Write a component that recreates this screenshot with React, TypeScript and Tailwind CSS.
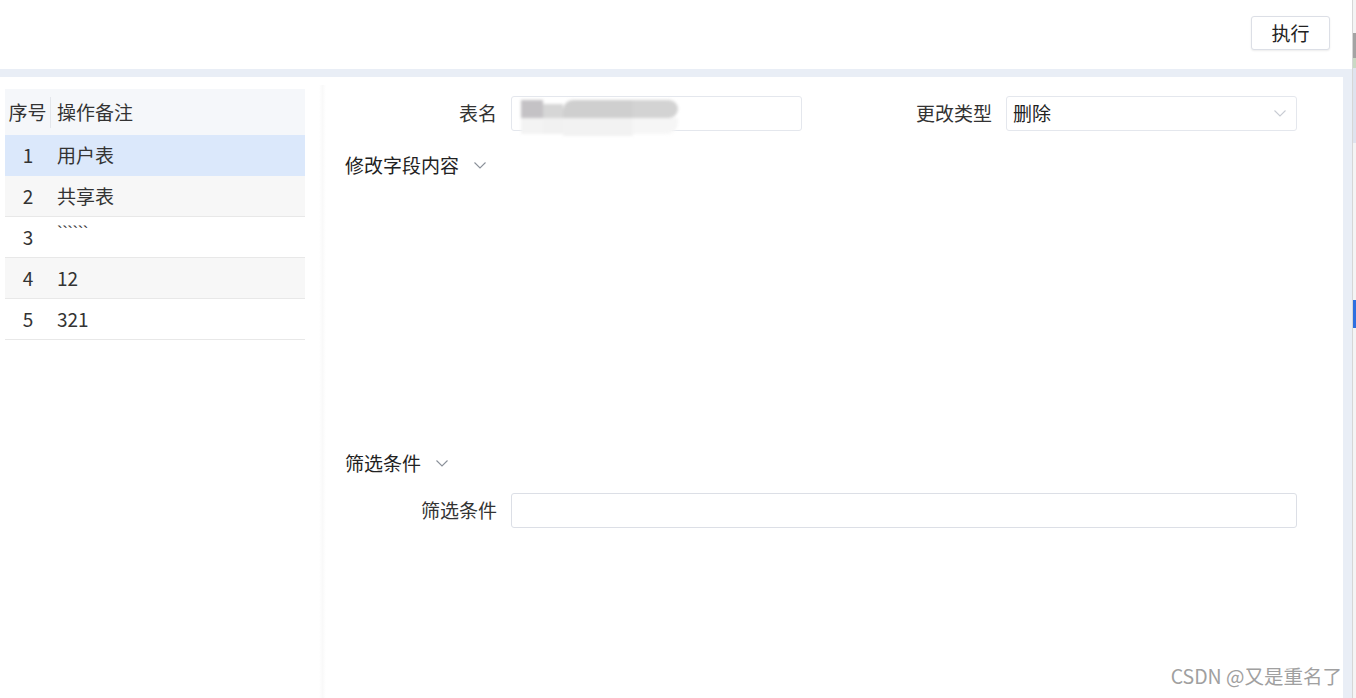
import React from "react";

const font = { fontFamily: '"Microsoft YaHei", "Noto Sans CJK SC", "Noto Sans", sans-serif' };

const rows = [
  { id: 1, note: "用户表" },
  { id: 2, note: "共享表" },
  { id: 3, note: "``````" },
  { id: 4, note: "12" },
  { id: 5, note: "321" },
];

function Chevron({ className }: { className?: string }) {
  return (
    <svg viewBox="0 0 12 7" className={className} fill="none">
      <polyline points="0.5,0.5 6,6 11.5,0.5" stroke="currentColor" strokeWidth="1.1" />
    </svg>
  );
}

function RecordTable() {
  return (
    <div className="w-[300px] text-[19px] text-[#333]">
      <div className="flex h-[46px] items-center bg-[#f5f7fa]">
        <div className="flex h-[31px] w-[46px] items-center justify-center border-r border-[#e3e6eb]">
          序号
        </div>
        <div className="pl-[6px]">操作备注</div>
      </div>
      {rows.map((r, i) => (
        <div
          key={r.id}
          className={`flex h-[41px] items-center border-b ${
            i === 0
              ? "border-[#dbe8fb] bg-[#dbe8fb]"
              : i % 2 === 1
              ? "border-[#e8e8e8] bg-[#f7f7f7]"
              : "border-[#e8e8e8] bg-white"
          }`}
        >
          <div className="w-[46px] text-center">{r.id}</div>
          {r.id === 3 ? (
            <div className="-mt-[8px] pl-[6px] text-[17px] tracking-[-0.5px]" style={{ fontFamily: '"Liberation Sans", sans-serif' }}>
              {r.note}
            </div>
          ) : (
            <div className="pl-[6px]">{r.note}</div>
          )}
        </div>
      ))}
    </div>
  );
}

function FieldRow({ label, children }: { label: string; children: React.ReactNode }) {
  return (
    <div className="flex h-[35px] items-center">
      <div className="w-[166px] shrink-0 pr-[14px] text-right text-[19px] text-[#333]">{label}</div>
      <div className="flex-1">{children}</div>
    </div>
  );
}

function Blurred() {
  return (
    <div className="pointer-events-none absolute left-[9px] top-[3px] flex h-[36px] w-[160px] blur-[1.5px]">
      <div className="flex flex-col">
        <div className="h-[18px] w-[22px] bg-[#c4c2c5]" />
        <div className="h-[16px] w-[22px] bg-[#f3f3f3]" />
      </div>
      <div className="flex flex-col">
        <div className="mt-[4px] h-[14px] w-[20px] bg-[#d6d6d6]" />
        <div className="h-[16px] w-[20px] bg-[#f1f1f1]" />
      </div>
      <div className="flex flex-col">
        <div className="h-[18px] w-[70px] rounded-tl-[10px] bg-[#cfcfcf]" />
        <div className="h-[18px] w-[70px] bg-[#f2f2f2]" />
      </div>
      <div className="flex flex-col">
        <div className="h-[18px] w-[45px] rounded-r-[12px] bg-[#d3d3d3]" />
        <div className="h-[16px] w-[45px] rounded-br-[12px] bg-[#f6f6f6]" />
      </div>
    </div>
  );
}

function FormPanel() {
  return (
    <div className="flex-1 pl-[19px] pr-[46px] pt-[19px]">
      <div className="flex gap-[38px]">
        <div className="flex-1">
          <FieldRow label="表名">
            <div className="relative h-[35px] w-full rounded-[3px] border border-[#e4e7ed] bg-white">
              <Blurred />
            </div>
          </FieldRow>
        </div>
        <div className="flex-1">
          <FieldRow label="更改类型">
            <div className="flex h-[35px] w-full items-center justify-between rounded-[3px] border border-[#e4e7ed] bg-white pl-[6px] pr-[10px] text-[19px] text-[#222]">
              <span>删除</span>
              <Chevron className="h-[7px] w-[12px] text-[#c8ccd3]" />
            </div>
          </FieldRow>
        </div>
      </div>

      <div className="mt-[21px] flex h-[26px] items-center gap-[15px] text-[19px] text-[#222]">
        <span>修改字段内容</span>
        <Chevron className="h-[7px] w-[12px] text-[#8a9099]" />
      </div>

      <div className="h-[272px]" />

      <div className="flex h-[26px] items-center gap-[15px] text-[19px] text-[#222]">
        <span>筛选条件</span>
        <Chevron className="h-[7px] w-[12px] text-[#8a9099]" />
      </div>

      <div className="mt-[17px]">
        <FieldRow label="筛选条件">
          <div className="h-[35px] w-full rounded-[3px] border border-[#dcdfe6] bg-white" />
        </FieldRow>
      </div>
    </div>
  );
}

export default function App() {
  return (
    <div className="relative flex h-[698px] w-[1356px] overflow-hidden bg-white" style={font}>
      <div className="flex w-[1343px] flex-col">
        <div className="flex h-[69px] items-start justify-end pr-[13px] pt-[16px]">
          <button className="h-[34px] w-[79px] rounded-[3px] border border-[#dcdfe6] bg-white text-[19px] text-[#222] shadow-[0_1px_2px_rgba(0,0,0,0.08)]">
            执行
          </button>
        </div>
        <div className="h-[8px] bg-[#e9eef6]" />
        <div className="flex flex-1">
          <div className="w-[319px] pl-[5px] pt-[12px]">
            <RecordTable />
          </div>
          <div className="mt-[8px] w-[7px] bg-gradient-to-r from-white via-[#f9f9f9] to-white" />
          <FormPanel />
        </div>
      </div>
      <div className="flex w-[13px]">
        <div className="flex w-[9px] flex-col">
          <div className="h-[69px] bg-white" />
          <div className="flex-1 bg-[#e9eef6]" />
        </div>
        <div className="flex w-[4px] flex-col border-l border-[#d6d6d6] bg-[#f4f4f4]">
          <div className="h-[33px]" />
          <div className="h-[25px] bg-[#a3a3a3]" />
          <div className="h-[10px] bg-[#c9d9c4]" />
          <div className="h-[75px] bg-[#dfe3ee]" />
          <div className="h-[157px]" />
          <div className="h-[28px] bg-[#2f6fe0]" />
          <div className="flex-1" />
        </div>
      </div>
      <div className="absolute bottom-[8px] right-[14px] text-[19.5px] text-[#a0a0a0]" style={{ fontFamily: '"Noto Sans CJK SC", sans-serif' }}>
        CSDN @又是重名了
      </div>
    </div>
  );
}
